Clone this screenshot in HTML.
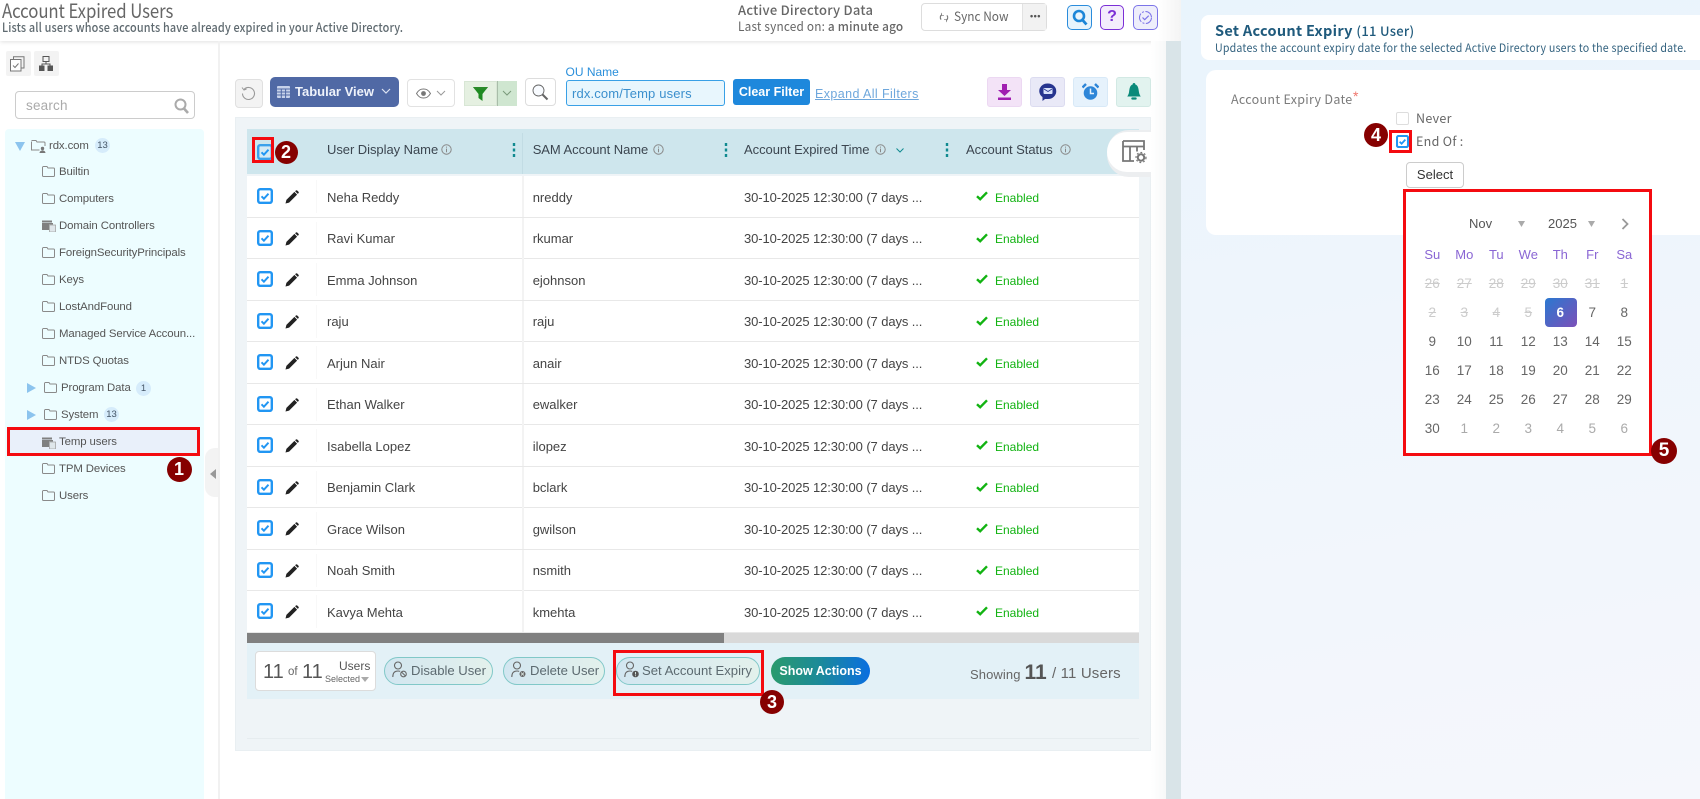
<!DOCTYPE html>
<html lang="en"><head><meta charset="utf-8"><title>Account Expired Users</title>
<style>
html,body{margin:0;padding:0;width:1700px;height:799px;overflow:hidden;background:#fff}
body{position:relative;font-family:"Liberation Sans",sans-serif;color:#444}
div,span.a,svg.a{position:absolute;box-sizing:border-box}
.t{position:absolute;line-height:20px;height:20px;margin-top:-10px;white-space:nowrap;transform-origin:0 50%}
.n{font-family:"Noto Sans CJK JP","Liberation Sans",sans-serif}
.s{font-size:11.4px;color:#555;letter-spacing:-.1px}
.h{font-size:13px;color:#3c4650;letter-spacing:-.05px}
.r{position:absolute;left:247px;width:892px;height:41.5px;background:#fff;border-bottom:1px solid #e8e8e8}
.r .t{font-size:13px;color:#444;top:21.5px}
.u{left:80px}.v{left:285.7px}.w{left:497px;letter-spacing:-.1px}.e{left:748px;color:#12b312!important;font-size:12px!important}
.cb{position:absolute;left:10px;top:12px}.pn{position:absolute;left:38px;top:14px}.ck{position:absolute;left:729px;top:15px}
.dv{position:absolute;left:69px;top:4px;width:1px;height:33px;background:#f8f8f8}
.dv2{position:absolute;left:275px;top:0;width:2px;height:41px;background:#f3f3f3}
.red{position:absolute;border:3px solid #f40b10;z-index:5}
.bd{position:absolute;border-radius:50%;background:#860000;color:#fff;font-weight:bold;text-align:center;z-index:6;font-size:18px}
.pill{position:absolute;top:657px;height:28px;border:1px solid #81c8c8;border-radius:14px;background:linear-gradient(90deg,#d2e6f0,#e3f1ec);font-size:13.1px;color:#5c6a70;line-height:26px;white-space:nowrap}
.ib{position:absolute;top:77px;width:35px;height:30px;border-radius:3px}
.wd,.dn{position:absolute;width:32px;margin-left:-16px;text-align:center;line-height:20px;height:20px;margin-top:-10px;font-size:13.5px;font-family:"Liberation Sans",sans-serif;color:#666}
.wd{color:#8a66d4;font-size:13px}
.x{color:#ccc;text-decoration:line-through}.o{color:#aaa}
</style></head><body>
<svg width="0" height="0" style="position:absolute">
<symbol id="fo" viewBox="0 0 13 11"><path d="M.5 2V9.5a1 1 0 0 0 1 1h10a1 1 0 0 0 1-1V3a1 1 0 0 0-1-1H6L5 .5H1.5a1 1 0 0 0-1 1z" fill="none" stroke="#8a8a8a"/></symbol>
<symbol id="dc" viewBox="0 0 14 13"><path d="M0 1.5h10v2H0zM0 4h11v1.5H7V11H0z" fill="#808080"/><rect x="7.5" y="6" width="6" height="7" fill="#dfe6ea" stroke="#9a9a9a" stroke-width=".7"/></symbol>
<symbol id="cb" viewBox="0 0 16 16"><rect x="1.2" y="1.2" width="13.6" height="13.6" rx="2" fill="#fff" stroke="#2196f3" stroke-width="2.4"/><path d="M4.5 8.3l2.4 2.4 4.6-5" fill="none" stroke="#2196f3" stroke-width="1.9"/></symbol>
<symbol id="pn" viewBox="0 0 14 14"><path d="M.5 13.5l.9-3.6L9.4 1.9l2.7 2.7-8 8zM10.1 1.2l.8-.7a1 1 0 0 1 1.3 0l1.3 1.3a1 1 0 0 1 0 1.3l-.7.8z" fill="#222"/></symbol>
<symbol id="ck" viewBox="0 0 12 10"><path d="M1 5.2l3.2 3L11 1.3" fill="none" stroke="#12b312" stroke-width="2.4"/></symbol>
<symbol id="in" viewBox="0 0 11 11"><circle cx="5.5" cy="5.5" r="4.7" fill="none" stroke="#888"/><path d="M5.5 4.6v3.6M5.5 2.6v1" stroke="#888"/></symbol>
<symbol id="dt" viewBox="0 0 4 14"><path d="M2 0v3M2 5.5v3M2 11v3" stroke="#108a90" stroke-width="2.4"/></symbol>
</svg>

<!-- top bar -->
<div style="left:0;top:0;width:1166px;height:41px;background:#fff;box-shadow:0 1px 4px rgba(0,0,0,.12)"></div>
<span class="t n" style="left:2px;top:10px;font-size:19.5px;color:#666;letter-spacing:-.1px;transform:scaleX(.86)">Account Expired Users</span>
<span class="t n" style="left:2px;top:26.5px;font-size:12.5px;color:#5f6a70;letter-spacing:.16px;font-weight:500;transform:scaleX(.87)">Lists all users whose accounts have already expired in your Active Directory.</span>
<span class="t n" style="left:738px;top:9.5px;font-size:13px;color:#666;font-weight:500;letter-spacing:.25px">Active Directory Data</span>
<span class="t n" style="left:738px;top:25.5px;font-size:12.5px;color:#666;letter-spacing:.2px;transform:scaleX(.945)">Last synced on: <b style="font-weight:500">a minute ago</b></span>
<div style="left:921px;top:3px;width:126px;height:28px;border:1px solid #ddd;border-radius:4px;background:#fff"></div>
<div style="left:1022px;top:4px;width:24px;height:26px;background:#f2f2f2;border-left:1px solid #e2e2e2"></div>
<span class="t" style="left:1030px;top:15.5px;font-size:9px;font-weight:bold;color:#555;letter-spacing:.5px">•••</span>
<svg class="a" style="left:939px;top:12px" width="10" height="11" viewBox="0 0 12 12"><path d="M2.5 8.5a4 4 0 0 1 1-6M9.5 3.5a4 4 0 0 1-1 6" fill="none" stroke="#777" stroke-width="1.4"/><path d="M3 .5v3h3M9 11.5v-3H6" fill="none" stroke="#777" stroke-width=".8"/></svg>
<span class="t n" style="left:954px;top:16px;font-size:12.5px;color:#666;transform:scaleX(.95)">Sync Now</span>
<div style="left:1067px;top:5px;width:25px;height:25px;border:1.5px solid #2a8cdc;border-radius:5px;background:#e8f4fc"></div>
<svg class="a" style="left:1072px;top:9px" width="16" height="17" viewBox="0 0 16 17"><circle cx="7" cy="7" r="5" fill="none" stroke="#1c86d8" stroke-width="2.6"/><path d="M10.5 11l4 4.5" stroke="#1c86d8" stroke-width="2.8"/></svg>
<div style="left:1100px;top:5px;width:24px;height:25px;border:1.5px solid #7b2fd6;border-radius:5px;background:#f3ecfc;color:#7b2fd6;font-weight:bold;font-size:16px;line-height:22px;text-align:center">?</div>
<div style="left:1133px;top:5px;width:25px;height:25px;border:1.5px solid #7c74e8;border-radius:5px;background:#eeeefb"></div>
<svg class="a" style="left:1138px;top:10px" width="15" height="15" viewBox="0 0 15 15"><circle cx="7.5" cy="7.5" r="6" fill="none" stroke="#7c74e8" stroke-dasharray="9 1.5 2 1.5"/><path d="M4.5 7.5l2.2 2.2 4-4" fill="none" stroke="#7c74e8" stroke-width="1.2"/></svg>

<!-- sidebar -->
<div style="left:218px;top:41px;width:2px;height:758px;background:#f1f1f1"></div>
<div style="left:5.5px;top:51px;width:25px;height:25px;background:#f3f3f3;border-radius:2px"></div>
<div style="left:33.5px;top:51px;width:25px;height:25px;background:#f3f3f3;border-radius:2px"></div>
<svg class="a" style="left:10px;top:56px" width="15" height="16" viewBox="0 0 15 16"><rect x=".5" y="3.5" width="10.5" height="11.5" fill="#fff" stroke="#777"/><path d="M3.5 3.5V.8H14V12h-3" fill="none" stroke="#777"/><path d="M3 9.5l2 2 3.5-4" fill="none" stroke="#777"/></svg>
<svg class="a" style="left:39px;top:56px" width="14" height="15" viewBox="0 0 14 15"><rect x="4" y=".5" width="6" height="5" fill="none" stroke="#555"/><rect x="0" y="9.5" width="5.5" height="5.5" fill="#555"/><rect x="8.5" y="9.5" width="5.5" height="5.5" fill="#555"/><path d="M7 5.5V8M3 10V8h8v2" fill="none" stroke="#555"/></svg>
<div style="left:15px;top:91px;width:180px;height:28px;border:1px solid #ccc;border-radius:4px;background:#fff"></div>
<span class="t" style="left:26px;top:105.5px;font-size:13.5px;color:#aaa;letter-spacing:.2px">search</span>
<svg class="a" style="left:174px;top:98px" width="15" height="16" viewBox="0 0 15 16"><circle cx="6.5" cy="6.5" r="5" fill="none" stroke="#aaa" stroke-width="2"/><path d="M10 10.5l4 4.5" stroke="#aaa" stroke-width="2.6"/></svg>
<div style="left:5px;top:129px;width:199px;height:670px;background:#edfdff;border-radius:4px 4px 0 0"></div>

<svg class="a" style="left:15px;top:142px" width="10" height="9" viewBox="0 0 10 9"><path d="M0 0h10L5 9z" fill="#8cc4ee"/></svg>
<svg class="a" style="left:31px;top:140px" width="15" height="13" viewBox="0 0 15 13"><path d="M.5 2V10h8M14 6V3a1 1 0 0 0-1-1H6L5 .5H1.5a1 1 0 0 0-1 1" fill="none" stroke="#8a8a8a"/><circle cx="11.5" cy="8.5" r="1.7" fill="#777"/><path d="M8.5 13a3 2.6 0 0 1 6 0z" fill="#777"/></svg>
<span class="t s" style="left:49px;top:146px">rdx.com</span>
<div style="left:95px;top:138px;width:15px;height:15px;border-radius:50%;background:#d6ecfb;font-size:9.5px;line-height:15px;text-align:center;color:#456">13</div>

<svg class="a" style="left:42px;top:166px" width="13" height="11"><use href="#fo"/></svg><span class="t s" style="left:59px;top:172px">Builtin</span>
<svg class="a" style="left:42px;top:193px" width="13" height="11"><use href="#fo"/></svg><span class="t s" style="left:59px;top:199px">Computers</span>
<svg class="a" style="left:42px;top:219px" width="14" height="13"><use href="#dc"/></svg><span class="t s" style="left:59px;top:226px">Domain Controllers</span>
<svg class="a" style="left:42px;top:247px" width="13" height="11"><use href="#fo"/></svg><span class="t s" style="left:59px;top:253px">ForeignSecurityPrincipals</span>
<svg class="a" style="left:42px;top:274px" width="13" height="11"><use href="#fo"/></svg><span class="t s" style="left:59px;top:280px">Keys</span>
<svg class="a" style="left:42px;top:301px" width="13" height="11"><use href="#fo"/></svg><span class="t s" style="left:59px;top:307px">LostAndFound</span>
<svg class="a" style="left:42px;top:328px" width="13" height="11"><use href="#fo"/></svg><span class="t s" style="left:59px;top:334px">Managed Service Accoun...</span>
<svg class="a" style="left:42px;top:355px" width="13" height="11"><use href="#fo"/></svg><span class="t s" style="left:59px;top:361px">NTDS Quotas</span>
<svg class="a" style="left:27px;top:383px" width="9" height="10" viewBox="0 0 9 10"><path d="M0 0l9 5-9 5z" fill="#8cc4ee"/></svg>
<svg class="a" style="left:44px;top:382px" width="13" height="11"><use href="#fo"/></svg><span class="t s" style="left:61px;top:388px">Program Data</span>
<div style="left:136px;top:381px;width:15px;height:15px;border-radius:50%;background:#d6ecfb;font-size:9.5px;line-height:15px;text-align:center;color:#456">1</div>
<svg class="a" style="left:27px;top:410px" width="9" height="10" viewBox="0 0 9 10"><path d="M0 0l9 5-9 5z" fill="#8cc4ee"/></svg>
<svg class="a" style="left:44px;top:409px" width="13" height="11"><use href="#fo"/></svg><span class="t s" style="left:61px;top:415px">System</span>
<div style="left:104px;top:407px;width:15px;height:15px;border-radius:50%;background:#d6ecfb;font-size:9.5px;line-height:15px;text-align:center;color:#456">13</div>
<div style="left:9px;top:429px;width:189px;height:26px;background:#e9f0fa"></div>
<svg class="a" style="left:42px;top:436px" width="14" height="13"><use href="#dc"/></svg><span class="t s" style="left:59px;top:442px">Temp users</span>
<div class="red" style="left:7px;top:427px;width:193px;height:29px"></div>
<svg class="a" style="left:42px;top:463px" width="13" height="11"><use href="#fo"/></svg><span class="t s" style="left:59px;top:469px">TPM Devices</span>
<svg class="a" style="left:42px;top:490px" width="13" height="11"><use href="#fo"/></svg><span class="t s" style="left:59px;top:496px">Users</span>
<div class="bd" style="left:166.5px;top:456.5px;width:25px;height:25px;line-height:25px">1</div>
<div style="left:205px;top:448px;width:13px;height:49px;background:#f3f3f3;border-radius:10px 0 0 10px"></div>
<svg class="a" style="left:210px;top:469px" width="6" height="10" viewBox="0 0 6 10"><path d="M6 0v10L0 5z" fill="#999"/></svg>

<!-- toolbar -->
<div style="left:234.5px;top:79px;width:28px;height:29px;background:#f3f3f3;border:1px solid #e0e0e0;border-radius:4px"></div>
<svg class="a" style="left:241px;top:86px" width="15" height="15" viewBox="0 0 15 15"><path d="M3 3.5a6 6 0 1 1-1.5 4" fill="none" stroke="#999" stroke-width="1.1"/><path d="M1 1.5l2 2.5 2.5-1" fill="none" stroke="#999"/></svg>
<div style="left:270px;top:77px;width:129px;height:30px;background:#5069a5;border-radius:5px"></div>
<svg class="a" style="left:277px;top:86px" width="13" height="12" viewBox="0 0 13 12"><rect width="13" height="12" rx="1" fill="#c7d2ea"/><path d="M0 3h13M0 6h13M0 9h13M4.3 3v9M8.6 3v9" stroke="#5069a5"/></svg>
<span class="t" style="left:295px;top:92px;font-size:13px;font-weight:bold;color:#eef2fa">Tabular View</span>
<svg class="a" style="left:381px;top:88px" width="10" height="7" viewBox="0 0 10 7"><path d="M1 1l4 4 4-4" fill="none" stroke="#dde3f2" stroke-width="1.2"/></svg>
<div style="left:407px;top:79px;width:48px;height:28px;background:#fff;border:1px solid #e2e2e2;border-radius:4px"></div>
<svg class="a" style="left:416px;top:88px" width="15" height="11" viewBox="0 0 15 11"><path d="M.5 5.5C3 1.5 5 1 7.500 1s4.500.5 7 4.500c-2.500 4-4.500 4.500-7 4.500S3 9.500.5 5.500z" fill="none" stroke="#777"/><circle cx="7.5" cy="5.5" r="2.4" fill="#777"/></svg>
<svg class="a" style="left:436px;top:90px" width="10" height="6" viewBox="0 0 10 6"><path d="M1 1l4 4 4-4" fill="none" stroke="#999"/></svg>
<div style="left:463.5px;top:81px;width:33.5px;height:25px;background:#e5f0e1;border:1px solid #d8e6d5"></div>
<div style="left:497px;top:81px;width:20px;height:25px;background:#cfe6d0;border-left:1px solid #a9bda9"></div>
<svg class="a" style="left:473px;top:87px" width="15" height="14" viewBox="0 0 15 14"><path d="M0 0h15L9.500 7v7L5.500 11V7z" fill="#1f8a22"/><path d="M0 0h15l-2 2.500H2z" fill="#2a8a2a"/></svg>
<svg class="a" style="left:502px;top:90px" width="10" height="6" viewBox="0 0 10 6"><path d="M1 1l4 4 4-4" fill="none" stroke="#7a9a7a"/></svg>
<div style="left:525px;top:78px;width:31px;height:28px;background:#fff;border:1px solid #ddd;border-radius:4px"></div>
<svg class="a" style="left:532px;top:84px" width="17" height="17" viewBox="0 0 17 17"><circle cx="6.5" cy="6.5" r="5.5" fill="#f8fbff" stroke="#666" stroke-width=".9"/><path d="M10.500 10.500l5 5" stroke="#666" stroke-width="2"/></svg>
<span class="t" style="left:565.5px;top:72px;font-size:12px;color:#2a8fdb">OU Name</span>
<div style="left:565.5px;top:80px;width:159.5px;height:26px;background:#e8f6fd;border:1px solid #39a0e6;border-radius:3px"></div>
<span class="t" style="left:572px;top:93.5px;font-size:13px;color:#3b8fcd;letter-spacing:.15px">rdx.com/Temp users</span>
<div style="left:733px;top:79px;width:77px;height:26px;background:#1e88dc;border-radius:3px;color:#fff;font-weight:bold;font-size:12.5px;line-height:26px;text-align:center">Clear Filter</div>
<span class="t" style="left:815px;top:94px;font-size:12.5px;color:#6ea7dc;text-decoration:underline;letter-spacing:.4px">Expand All Filters</span>

<div class="ib" style="left:987px;background:#f3e3f7;border:1px solid #ecd8f2"></div>
<svg class="a" style="left:998px;top:84px" width="13" height="16" viewBox="0 0 13 16"><path d="M4 0h5v6h4L6.500 12 0 6h4zM0 13.500h13V16H0z" fill="#a01fb0"/></svg>
<div class="ib" style="left:1030px;background:#e9e9f7;border:1px solid #dcdcf0"></div>
<svg class="a" style="left:1039px;top:83px" width="18" height="18" viewBox="0 0 18 18"><path d="M9 .5a8 7.500 0 0 1 0 15.500c-1 0-2-.1-3 0L3.500 18V14A8 7.500 0 0 1 9 .5z" fill="#27358f"/><rect x="4.500" y="5" width="9" height="6" rx="1" fill="#d9e2fb"/><path d="M5 6l4 2.500L13 6" fill="none" stroke="#27358f" stroke-width=".8"/></svg>
<div class="ib" style="left:1073px;background:#e6f2fc;border:1px solid #d8e9f7"></div>
<svg class="a" style="left:1082px;top:83px" width="17" height="18" viewBox="0 0 17 18"><circle cx="8.500" cy="10" r="6.800" fill="#2e86d8"/><path d="M8.500 5.500V10.500H12" fill="none" stroke="#e6f2fc" stroke-width="1.500"/><path d="M.5 4.500L4 1M16.500 4.500L13 1" stroke="#2e86d8" stroke-width="2.400"/></svg>
<div class="ib" style="left:1116px;background:#e2f3ef;border:1px solid #d2e9e4"></div>
<svg class="a" style="left:1127px;top:83px" width="14" height="18" viewBox="0 0 15 20"><path d="M7.500 0c1 0 1.500.7 1.500 1.600C12 2.500 12.500 6 13 10c.2 2 1 3.500 2 5H0c1-1.500 1.800-3 2-5 .5-4 1-7.500 4-8.400C6 .7 6.500 0 7.500 0z" fill="#0a8a7a"/><rect x="4.500" y="16" width="6" height="2.500" rx="1.200" fill="#0a8a7a"/></svg>

<!-- table region -->
<div style="left:235px;top:117px;width:916px;height:634px;background:#eff4f7;border:1px solid #e9eff2"></div>
<div style="left:247px;top:129px;width:892px;height:610px;border-bottom:1px solid #e6ecef;background:#eff4f7"></div>
<div style="left:247px;top:129px;width:892px;height:45px;background:#cee6ed"></div>
<div style="left:522px;top:133px;width:1px;height:41px;background:#c2dce4"></div>
<svg class="a" style="left:257px;top:144px" width="16" height="16" viewBox="0 0 16 16"><rect x="1.2" y="1.2" width="13.6" height="13.6" rx="2" fill="#d5eaf4" stroke="#3ba1eb" stroke-width="2.4"/><path d="M4.500 8.300l2.400 2.400 4.600-5" fill="none" stroke="#2196f3" stroke-width="1.900"/></svg>
<div class="red" style="left:252px;top:137px;width:22px;height:26px"></div>
<div class="bd" style="left:274.5px;top:140.5px;width:23px;height:23px;line-height:23px">2</div>
<span class="t h" style="left:327px;top:149.5px">User Display Name</span>
<svg class="a" style="left:441px;top:144px" width="11" height="11"><use href="#in"/></svg>
<svg class="a" style="left:511.5px;top:143px" width="4" height="14"><use href="#dt"/></svg>
<span class="t h" style="left:532.7px;top:149.5px">SAM Account Name</span>
<svg class="a" style="left:653px;top:144px" width="11" height="11"><use href="#in"/></svg>
<svg class="a" style="left:723.5px;top:143px" width="4" height="14"><use href="#dt"/></svg>
<span class="t h" style="left:744px;top:149.5px">Account Expired Time</span>
<svg class="a" style="left:875px;top:144px" width="11" height="11"><use href="#in"/></svg>
<svg class="a" style="left:896px;top:148px" width="8" height="5" viewBox="0 0 8 5"><path d="M.5.5L4 4 7.500.5" fill="none" stroke="#108a90"/></svg>
<svg class="a" style="left:945px;top:143px" width="4" height="14"><use href="#dt"/></svg>
<span class="t h" style="left:966px;top:149.5px">Account Status</span>
<svg class="a" style="left:1059.5px;top:144px" width="11" height="11"><use href="#in"/></svg>

<div class="r" style="top:176px"><svg class="cb" width="16" height="16"><use href="#cb"/></svg><svg class="pn" width="14" height="14"><use href="#pn"/></svg><i class="dv"></i><i class="dv2"></i><span class="t u">Neha Reddy</span><span class="t v">nreddy</span><span class="t w">30-10-2025 12:30:00 (7 days ...</span><svg class="ck" width="12" height="10"><use href="#ck"/></svg><span class="t e">Enabled</span></div>
<div class="r" style="top:217.5px"><svg class="cb" width="16" height="16"><use href="#cb"/></svg><svg class="pn" width="14" height="14"><use href="#pn"/></svg><i class="dv"></i><i class="dv2"></i><span class="t u">Ravi Kumar</span><span class="t v">rkumar</span><span class="t w">30-10-2025 12:30:00 (7 days ...</span><svg class="ck" width="12" height="10"><use href="#ck"/></svg><span class="t e">Enabled</span></div>
<div class="r" style="top:259px"><svg class="cb" width="16" height="16"><use href="#cb"/></svg><svg class="pn" width="14" height="14"><use href="#pn"/></svg><i class="dv"></i><i class="dv2"></i><span class="t u">Emma Johnson</span><span class="t v">ejohnson</span><span class="t w">30-10-2025 12:30:00 (7 days ...</span><svg class="ck" width="12" height="10"><use href="#ck"/></svg><span class="t e">Enabled</span></div>
<div class="r" style="top:300.5px"><svg class="cb" width="16" height="16"><use href="#cb"/></svg><svg class="pn" width="14" height="14"><use href="#pn"/></svg><i class="dv"></i><i class="dv2"></i><span class="t u">raju</span><span class="t v">raju</span><span class="t w">30-10-2025 12:30:00 (7 days ...</span><svg class="ck" width="12" height="10"><use href="#ck"/></svg><span class="t e">Enabled</span></div>
<div class="r" style="top:342px"><svg class="cb" width="16" height="16"><use href="#cb"/></svg><svg class="pn" width="14" height="14"><use href="#pn"/></svg><i class="dv"></i><i class="dv2"></i><span class="t u">Arjun Nair</span><span class="t v">anair</span><span class="t w">30-10-2025 12:30:00 (7 days ...</span><svg class="ck" width="12" height="10"><use href="#ck"/></svg><span class="t e">Enabled</span></div>
<div class="r" style="top:383.5px"><svg class="cb" width="16" height="16"><use href="#cb"/></svg><svg class="pn" width="14" height="14"><use href="#pn"/></svg><i class="dv"></i><i class="dv2"></i><span class="t u">Ethan Walker</span><span class="t v">ewalker</span><span class="t w">30-10-2025 12:30:00 (7 days ...</span><svg class="ck" width="12" height="10"><use href="#ck"/></svg><span class="t e">Enabled</span></div>
<div class="r" style="top:425px"><svg class="cb" width="16" height="16"><use href="#cb"/></svg><svg class="pn" width="14" height="14"><use href="#pn"/></svg><i class="dv"></i><i class="dv2"></i><span class="t u">Isabella Lopez</span><span class="t v">ilopez</span><span class="t w">30-10-2025 12:30:00 (7 days ...</span><svg class="ck" width="12" height="10"><use href="#ck"/></svg><span class="t e">Enabled</span></div>
<div class="r" style="top:466.5px"><svg class="cb" width="16" height="16"><use href="#cb"/></svg><svg class="pn" width="14" height="14"><use href="#pn"/></svg><i class="dv"></i><i class="dv2"></i><span class="t u">Benjamin Clark</span><span class="t v">bclark</span><span class="t w">30-10-2025 12:30:00 (7 days ...</span><svg class="ck" width="12" height="10"><use href="#ck"/></svg><span class="t e">Enabled</span></div>
<div class="r" style="top:508px"><svg class="cb" width="16" height="16"><use href="#cb"/></svg><svg class="pn" width="14" height="14"><use href="#pn"/></svg><i class="dv"></i><i class="dv2"></i><span class="t u">Grace Wilson</span><span class="t v">gwilson</span><span class="t w">30-10-2025 12:30:00 (7 days ...</span><svg class="ck" width="12" height="10"><use href="#ck"/></svg><span class="t e">Enabled</span></div>
<div class="r" style="top:549.5px"><svg class="cb" width="16" height="16"><use href="#cb"/></svg><svg class="pn" width="14" height="14"><use href="#pn"/></svg><i class="dv"></i><i class="dv2"></i><span class="t u">Noah Smith</span><span class="t v">nsmith</span><span class="t w">30-10-2025 12:30:00 (7 days ...</span><svg class="ck" width="12" height="10"><use href="#ck"/></svg><span class="t e">Enabled</span></div>
<div class="r" style="top:591px"><svg class="cb" width="16" height="16"><use href="#cb"/></svg><svg class="pn" width="14" height="14"><use href="#pn"/></svg><i class="dv"></i><i class="dv2"></i><span class="t u">Kavya Mehta</span><span class="t v">kmehta</span><span class="t w">30-10-2025 12:30:00 (7 days ...</span><svg class="ck" width="12" height="10"><use href="#ck"/></svg><span class="t e">Enabled</span></div>

<!-- table settings tab -->
<div style="left:1107px;top:130px;width:53px;height:47px;background:#eceef0;border-radius:22px 6px 6px 22px"></div>
<div style="left:1107px;top:132px;width:50px;height:40px;background:#fff;border-radius:20px 0 0 20px"></div>
<svg class="a" style="left:1122px;top:140px" width="25" height="24" viewBox="0 0 25 24"><path d="M1 1h21v9M1 1v20h11M1 6.500h21M8 6.500V21M15 6.500v5" fill="none" stroke="#777" stroke-width="1.800"/><circle cx="19" cy="17.500" r="3.200" fill="none" stroke="#777" stroke-width="2"/><circle cx="19" cy="17.500" r="5" fill="none" stroke="#777" stroke-width="1.200" stroke-dasharray="1.800 2"/></svg>

<!-- scrollbar + footer -->
<div style="left:247px;top:633px;width:892px;height:10px;background:#d9d9d9"></div>
<div style="left:247px;top:633px;width:477px;height:10px;background:#808080"></div>
<div style="left:247px;top:643px;width:892px;height:56px;background:#e3f1f7"></div>
<div style="left:255px;top:651px;width:121px;height:40px;background:#fff;border:1px solid #dcdcdc;border-radius:4px"></div>
<span class="t" style="left:263px;top:671.5px;font-size:20px;color:#555">11</span>
<span class="t" style="left:288px;top:672px;font-size:11.5px;color:#666">of</span>
<span class="t" style="left:302px;top:671.5px;font-size:20px;color:#555">11</span>
<span class="t" style="left:339px;top:666px;font-size:12px;color:#555">Users</span>
<span class="t" style="left:325px;top:679px;font-size:9px;color:#666">Selected</span>
<svg class="a" style="left:361px;top:677px" width="8" height="5" viewBox="0 0 8 5"><path d="M0 0h8L4 5z" fill="#aaa"/></svg>

<div class="pill" style="left:384px;width:109px;padding-left:26px">Disable User</div>
<svg class="a" style="left:392px;top:661px" width="16" height="18" viewBox="0 0 16 18"><circle cx="6" cy="4.500" r="3.500" fill="none" stroke="#666" stroke-width="1.100"/><path d="M.8 16c0-4 1.500-6 5.200-6 1 0 1.600.2 2.200.4" fill="none" stroke="#666" stroke-width="1.100"/><circle cx="11.500" cy="13" r="2.800" fill="none" stroke="#666" stroke-width="1.100"/><path d="M9.500 11l4 4" stroke="#666"/></svg>
<div class="pill" style="left:503px;width:101.5px;padding-left:26px">Delete User</div>
<svg class="a" style="left:511px;top:661px" width="16" height="18" viewBox="0 0 16 18"><circle cx="6" cy="4.500" r="3.500" fill="none" stroke="#666" stroke-width="1.100"/><path d="M.8 16c0-4 1.500-6 5.200-6 1 0 1.600.2 2.200.4" fill="none" stroke="#666" stroke-width="1.100"/><circle cx="11.500" cy="13" r="3" fill="#666"/><path d="M10 11.500l3 3M13 11.500l-3 3" stroke="#e3f1ec" stroke-width=".8"/></svg>
<div class="pill" style="left:616px;width:144px;padding-left:25px">Set Account Expiry</div>
<svg class="a" style="left:624px;top:661px" width="16" height="18" viewBox="0 0 16 18"><circle cx="6" cy="4.500" r="3.500" fill="none" stroke="#666" stroke-width="1.100"/><path d="M.8 16c0-4 1.500-6 5.200-6 1 0 1.600.2 2.200.4" fill="none" stroke="#666" stroke-width="1.100"/><circle cx="11.500" cy="13" r="3.300" fill="#555"/><path d="M11.500 11v2.500M11.500 14.300v.8" stroke="#e3f1ec" stroke-width=".9"/></svg>
<div class="red" style="left:612.5px;top:650px;width:151px;height:46px"></div>
<div class="bd" style="left:760px;top:690px;width:24px;height:24px;line-height:24px">3</div>
<div style="left:771px;top:657px;width:99px;height:28px;border-radius:14px;background:linear-gradient(90deg,#2a9a6d,#1c8a9a 50%,#0a6ee0);color:#fff;font-weight:bold;font-size:12.5px;line-height:28px;text-align:center;z-index:4">Show Actions</div>
<span class="t" style="left:970px;top:674.5px;font-size:13px;color:#666;letter-spacing:.1px">Showing</span>
<span class="t" style="left:1024.5px;top:672.5px;font-size:21px;font-weight:bold;color:#555">11</span>
<span class="t" style="left:1052px;top:674px;font-size:15px;color:#666;letter-spacing:.15px">/ 11 Users</span>

<!-- panel -->
<div style="left:1151px;top:41px;width:15px;height:758px;background:linear-gradient(90deg,#fff,#f7f8f8)"></div>
<div style="left:1158px;top:0;width:23px;height:41px;background:linear-gradient(90deg,#fff,#f4f4f4)"></div>
<div style="left:1166px;top:41px;width:15px;height:758px;background:#d9e4e8"></div>
<div style="left:1181px;top:0;width:519px;height:799px;background:linear-gradient(170deg,#e9f4fc 0%,#eff5fc 40%,#f5f7fc 100%)"></div>
<div style="left:1201px;top:15px;width:499px;height:45px;background:#fff;border-radius:8px 0 0 8px"></div>
<span class="t n" style="left:1215px;top:30.5px;font-size:14.5px;font-weight:700;color:#1f5a7c;letter-spacing:.3px">Set Account Expiry <span style="font-weight:500;font-size:13px">(11 User)</span></span>
<span class="t n" style="left:1215px;top:48px;font-size:11.5px;color:#33627f;letter-spacing:.2px;transform:scaleX(.925)">Updates the account expiry date for the selected Active Directory users to the specified date.</span>
<div style="left:1206px;top:70px;width:494px;height:165px;background:#fff;border-radius:10px 0 0 10px"></div>
<span class="t n" style="left:1231px;top:98.5px;font-size:12.5px;color:#7b7b7b;letter-spacing:.3px">Account Expiry Date</span>
<span class="t" style="left:1353px;top:96px;font-size:14px;color:#f0756c">*</span>
<div style="left:1396px;top:112px;width:13px;height:13px;border:1.5px solid #ddd;border-radius:2px;background:#fff"></div>
<span class="t n" style="left:1416px;top:118px;font-size:12.5px;color:#666;letter-spacing:.3px">Never</span>
<svg class="a" style="left:1396px;top:135px" width="13" height="13" viewBox="0 0 16 16"><rect x="1.2" y="1.2" width="13.6" height="13.6" rx="2" fill="#fff" stroke="#2196f3" stroke-width="2.6"/><path d="M4.500 8.300l2.400 2.400 4.600-5" fill="none" stroke="#2196f3" stroke-width="2.200"/></svg>
<div class="red" style="left:1389px;top:130px;width:23px;height:23px"></div>
<div class="bd" style="left:1364px;top:123px;width:24px;height:24px;line-height:24px">4</div>
<span class="t n" style="left:1416px;top:141px;font-size:12.5px;color:#666;letter-spacing:.3px">End Of :</span>
<div style="left:1406px;top:162px;width:58px;height:26px;border:1px solid #ccc;border-radius:4px;background:#fff;font-size:13px;line-height:24px;text-align:center;color:#333">Select</div>
<div style="left:1405px;top:190px;width:245px;height:265px;background:#fff"></div>
<div class="red" style="left:1403px;top:189px;width:249px;height:267px;border-width:3.5px"></div>
<span class="t" style="left:1469px;top:223.5px;font-size:13px;color:#555">Nov</span>
<svg class="a" style="left:1518px;top:221px" width="7" height="6" viewBox="0 0 7 6"><path d="M0 0h7L3.500 6z" fill="#aaa"/></svg>
<span class="t" style="left:1548px;top:223.5px;font-size:13px;color:#555">2025</span>
<svg class="a" style="left:1588px;top:221px" width="7" height="6" viewBox="0 0 7 6"><path d="M0 0h7L3.500 6z" fill="#aaa"/></svg>
<svg class="a" style="left:1621px;top:218px" width="8" height="12" viewBox="0 0 8 12"><path d="M1.500 1l5 5-5 5" fill="none" stroke="#999" stroke-width="1.800"/></svg>

<span class="wd" style="left:1432.3px;top:255px">Su</span><span class="wd" style="left:1464.3px;top:255px">Mo</span><span class="wd" style="left:1496.3px;top:255px">Tu</span><span class="wd" style="left:1528.3px;top:255px">We</span><span class="wd" style="left:1560.3px;top:255px">Th</span><span class="wd" style="left:1592.3px;top:255px">Fr</span><span class="wd" style="left:1624.3px;top:255px">Sa</span>

<span class="dn x" style="left:1432.3px;top:284px">26</span><span class="dn x" style="left:1464.3px;top:284px">27</span><span class="dn x" style="left:1496.3px;top:284px">28</span><span class="dn x" style="left:1528.3px;top:284px">29</span><span class="dn x" style="left:1560.3px;top:284px">30</span><span class="dn x" style="left:1592.3px;top:284px">31</span><span class="dn x" style="left:1624.3px;top:284px">1</span>

<div style="left:1545px;top:298px;width:32px;height:29px;border-radius:4px;background:linear-gradient(135deg,#2a78d0,#7c50b8)"></div>
<span class="dn x" style="left:1432.3px;top:313px">2</span><span class="dn x" style="left:1464.3px;top:313px">3</span><span class="dn x" style="left:1496.3px;top:313px">4</span><span class="dn x" style="left:1528.3px;top:313px">5</span><span class="dn" style="left:1560.3px;top:313px;color:#fff;font-weight:bold">6</span><span class="dn" style="left:1592.3px;top:313px">7</span><span class="dn" style="left:1624.3px;top:313px">8</span>

<span class="dn" style="left:1432.3px;top:342px">9</span><span class="dn" style="left:1464.3px;top:342px">10</span><span class="dn" style="left:1496.3px;top:342px">11</span><span class="dn" style="left:1528.3px;top:342px">12</span><span class="dn" style="left:1560.3px;top:342px">13</span><span class="dn" style="left:1592.3px;top:342px">14</span><span class="dn" style="left:1624.3px;top:342px">15</span>

<span class="dn" style="left:1432.3px;top:371px">16</span><span class="dn" style="left:1464.3px;top:371px">17</span><span class="dn" style="left:1496.3px;top:371px">18</span><span class="dn" style="left:1528.3px;top:371px">19</span><span class="dn" style="left:1560.3px;top:371px">20</span><span class="dn" style="left:1592.3px;top:371px">21</span><span class="dn" style="left:1624.3px;top:371px">22</span>

<span class="dn" style="left:1432.3px;top:400px">23</span><span class="dn" style="left:1464.3px;top:400px">24</span><span class="dn" style="left:1496.3px;top:400px">25</span><span class="dn" style="left:1528.3px;top:400px">26</span><span class="dn" style="left:1560.3px;top:400px">27</span><span class="dn" style="left:1592.3px;top:400px">28</span><span class="dn" style="left:1624.3px;top:400px">29</span>

<span class="dn" style="left:1432.3px;top:429px">30</span><span class="dn o" style="left:1464.3px;top:429px">1</span><span class="dn o" style="left:1496.3px;top:429px">2</span><span class="dn o" style="left:1528.3px;top:429px">3</span><span class="dn o" style="left:1560.3px;top:429px">4</span><span class="dn o" style="left:1592.3px;top:429px">5</span><span class="dn o" style="left:1624.3px;top:429px">6</span>

<div class="bd" style="left:1651px;top:438px;width:26px;height:26px;line-height:26px;font-size:19px">5</div>
</body></html>
